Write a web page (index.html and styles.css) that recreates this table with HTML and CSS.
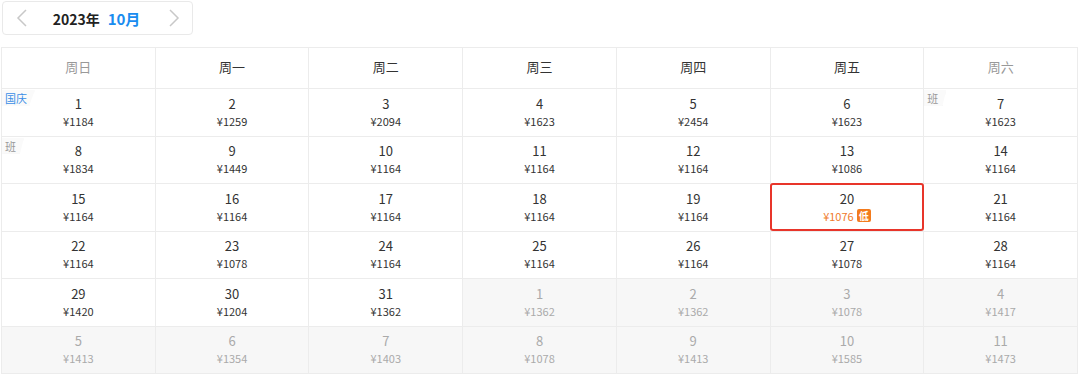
FILE: index.html
```html
<!DOCTYPE html>
<html lang="zh">
<head>
<meta charset="utf-8">
<link rel="stylesheet" href="styles.css">
</head>
<body>
<div class="nav">
  <svg class="chev" width="12" height="18" viewBox="0 0 12 18"><path d="M10 1 L2 9 L10 17" fill="none" stroke="#c8c8c8" stroke-width="1.5"/></svg>
  <div class="title"><span class="year">2023年</span><span class="month">10月</span></div>
  <svg class="chev" width="12" height="18" viewBox="0 0 12 18"><path d="M2 1 L10 9 L2 17" fill="none" stroke="#c8c8c8" stroke-width="1.5"/></svg>
</div>
<div class="cal">
  <div class="hd wk">周日</div><div class="hd">周一</div><div class="hd">周二</div><div class="hd">周三</div><div class="hd">周四</div><div class="hd">周五</div><div class="hd wk">周六</div>

  <div class="c"><span class="tag blue">国庆</span><b>1</b><i>¥1184</i></div>
  <div class="c"><b>2</b><i>¥1259</i></div>
  <div class="c"><b>3</b><i>¥2094</i></div>
  <div class="c"><b>4</b><i>¥1623</i></div>
  <div class="c"><b>5</b><i>¥2454</i></div>
  <div class="c"><b>6</b><i>¥1623</i></div>
  <div class="c"><span class="tag">班</span><b>7</b><i>¥1623</i></div>

  <div class="c"><span class="tag">班</span><b>8</b><i>¥1834</i></div>
  <div class="c"><b>9</b><i>¥1449</i></div>
  <div class="c"><b>10</b><i>¥1164</i></div>
  <div class="c"><b>11</b><i>¥1164</i></div>
  <div class="c"><b>12</b><i>¥1164</i></div>
  <div class="c"><b>13</b><i>¥1086</i></div>
  <div class="c"><b>14</b><i>¥1164</i></div>

  <div class="c"><b>15</b><i>¥1164</i></div>
  <div class="c"><b>16</b><i>¥1164</i></div>
  <div class="c"><b>17</b><i>¥1164</i></div>
  <div class="c"><b>18</b><i>¥1164</i></div>
  <div class="c"><b>19</b><i>¥1164</i></div>
  <div class="c sel"><b>20</b><i class="low">¥1076<span class="lowtag">低</span></i></div>
  <div class="c"><b>21</b><i>¥1164</i></div>

  <div class="c"><b>22</b><i>¥1164</i></div>
  <div class="c"><b>23</b><i>¥1078</i></div>
  <div class="c"><b>24</b><i>¥1164</i></div>
  <div class="c"><b>25</b><i>¥1164</i></div>
  <div class="c"><b>26</b><i>¥1164</i></div>
  <div class="c"><b>27</b><i>¥1078</i></div>
  <div class="c"><b>28</b><i>¥1164</i></div>

  <div class="c"><b>29</b><i>¥1420</i></div>
  <div class="c"><b>30</b><i>¥1204</i></div>
  <div class="c"><b>31</b><i>¥1362</i></div>
  <div class="c off"><b>1</b><i>¥1362</i></div>
  <div class="c off"><b>2</b><i>¥1362</i></div>
  <div class="c off"><b>3</b><i>¥1078</i></div>
  <div class="c off"><b>4</b><i>¥1417</i></div>

  <div class="c off"><b>5</b><i>¥1413</i></div>
  <div class="c off"><b>6</b><i>¥1354</i></div>
  <div class="c off"><b>7</b><i>¥1403</i></div>
  <div class="c off"><b>8</b><i>¥1078</i></div>
  <div class="c off"><b>9</b><i>¥1413</i></div>
  <div class="c off"><b>10</b><i>¥1585</i></div>
  <div class="c off"><b>11</b><i>¥1473</i></div>
</div>
</body>
</html>
```
FILE: styles.css
```css
* { box-sizing: border-box; }
body {
  margin: 0;
  padding: 1px 0 0 1px;
  background: #fff;
  font-family: "Noto Sans CJK SC", "Noto Sans", sans-serif;
  color: #333;
}
.nav {
  margin-left: 1px;
  width: 191px;
  height: 34px;
  border: 1px solid #e9e9e9;
  border-radius: 4px;
  display: flex;
  align-items: center;
  justify-content: space-between;
  padding: 0 12px 0 13px;
}
.title { display: flex; align-items: baseline; gap: 8px; font-weight: bold; margin-left: -3px; }
.year { font-size: 14px; color: #222; }
.month { font-size: 15px; color: #1a8cf0; }
.cal {
  margin-top: 12px;
  width: 1077px;
  display: grid;
  grid-template-columns: repeat(7, 1fr);
  grid-template-rows: 41px repeat(6, 47.5px);
  border-top: 1px solid #ececec;
  border-left: 1px solid #ececec;
}
.hd, .c {
  border-right: 1px solid #ececec;
  border-bottom: 1px solid #ececec;
}
.hd {
  display: flex;
  align-items: center;
  justify-content: center;
  font-size: 13px;
  color: #333;
  padding-bottom: 4px;
}
.hd.wk { color: #999; }
.c {
  position: relative;
  display: flex;
  flex-direction: column;
  align-items: center;
  justify-content: center;
  padding-bottom: 1px;
}
.c b {
  font-weight: normal;
  font-size: 13px;
  line-height: 18px;
  color: #333;
}
.c i {
  font-style: normal;
  font-size: 11px;
  line-height: 16px;
  color: #333;
  display: flex;
  align-items: center;
}
.c.off { background: #f7f7f7; }
.c.off b, .c.off i { color: #aaa; }
.c i.low { color: #f07a2a; }
.lowtag {
  margin-left: 3px;
  background: #f37b1d;
  color: #fff;
  font-size: 10px;
  line-height: 13px;
  padding: 0 2px;
  border-radius: 2px;
  font-weight: bold;
}
.c.sel::after {
  content: "";
  position: absolute;
  left: -1px; top: -1px; right: -1px; bottom: 0;
  border: 2px solid #e8352a;
  border-radius: 3px;
}
.tag {
  position: absolute;
  left: 0;
  top: 1px;
  font-size: 11px;
  line-height: 16px;
  padding: 0 8px 0 3px;
  color: #999;
  background: #fafafa;
  clip-path: polygon(0 0, 100% 0, 82% 100%, 0 100%);
  box-shadow: 0 1px 2px rgba(0,0,0,0.08);
}
.tag.blue { color: #3a8ee6; }
```
